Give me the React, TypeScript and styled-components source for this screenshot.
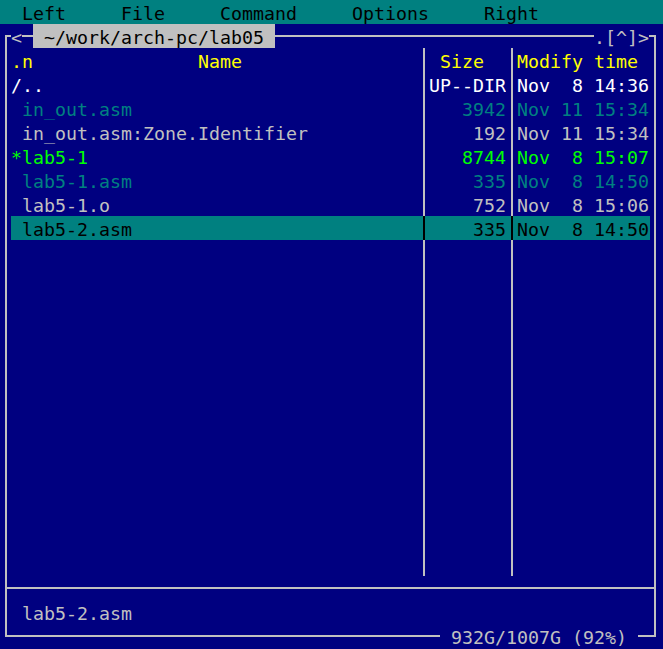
import styled, { createGlobalStyle } from 'styled-components';

// terminal grid: one cell is 11px wide and 24px high
const NAVY = '#000080';
const TEAL = '#008080';
const GRAY = '#c0c0c0';
const WHITE = '#ffffff';
const YELLOW = '#ffff00';
const GREEN = '#00ff00';
const BLACK = '#000000';

const GlobalStyle = createGlobalStyle`
  html, body {
    margin: 0;
    padding: 0;
    background: ${NAVY};
  }
`;

// line-height is a bit taller than the cell so glyphs sit 2px lower, like the terminal
const Screen = styled.div`
  width: 663px;
  height: 649px;
  overflow: hidden;
  background: ${NAVY};
  color: ${GRAY};
  font-family: 'DejaVu Sans Mono', 'Liberation Mono', monospace;
  font-size: 18.27px;
  line-height: 28px;
  white-space: pre;
`;

const MenuBar = styled.div`
  display: flex;
  gap: 55px;
  height: 24px;
  overflow: hidden;
  padding-left: 22px;
  background: ${TEAL};
  color: ${BLACK};
`;

const Panel = styled.div`
  position: relative;
  box-sizing: border-box;
  width: 651px;
  height: 602px;
  margin: 11px 0 0 5px;
  padding: 11px 4px;
  border: 2px solid ${GRAY};
  display: flex;
  flex-direction: column;
`;

const TitleTab = styled.div`
  position: absolute;
  top: -13px;
  left: 4px;
  display: flex;
  height: 24px;
  overflow: hidden;
`;

const Arrow = styled.span`
  background: ${NAVY};
  color: ${GRAY};
`;

const Gap = styled.span`
  width: 11px;
`;

const PathLabel = styled.span`
  background: ${GRAY};
  color: ${BLACK};
`;

const CornerLabel = styled.div<{ $bottom?: boolean }>`
  position: absolute;
  ${(p) => (p.$bottom ? 'bottom: -13px; right: 16px;' : 'top: -13px; right: 5px;')}
  height: 24px;
  overflow: hidden;
  background: ${NAVY};
  color: ${GRAY};
`;

const Listing = styled.div`
  height: 528px;
  display: flex;
  flex-direction: column;
`;

const Row = styled.div<{ $color: string; $selected?: boolean; $fill?: boolean }>`
  display: grid;
  grid-template-columns: 407px 11px 77px 11px 132px;
  height: ${(p) => (p.$fill ? 'auto' : '24px')};
  flex: ${(p) => (p.$fill ? 1 : 'none')};
  background: ${(p) => (p.$selected ? TEAL : 'transparent')};
  color: ${(p) => p.$color};
`;

const Cell = styled.div<{ $right?: boolean }>`
  overflow: hidden;
  text-align: ${(p) => (p.$right ? 'right' : 'left')};
`;

const Sep = styled.div<{ $line: string }>`
  background: linear-gradient(${(p) => p.$line}, ${(p) => p.$line}) 5px 0 / 2px 100% no-repeat;
`;

const Divider = styled.div`
  height: 2px;
  margin: 11px -4px;
  background: ${GRAY};
`;

const Status = styled.div`
  height: 24px;
  overflow: hidden;
  padding-left: 11px;
  color: ${GRAY};
`;

type Entry = { name: string; size: string; date: string; color: string; selected?: boolean };

const files: Entry[] = [
  { name: '/..', size: 'UP--DIR', date: 'Nov  8 14:36', color: WHITE },
  { name: ' in_out.asm', size: '3942', date: 'Nov 11 15:34', color: TEAL },
  { name: ' in_out.asm:Zone.Identifier', size: '192', date: 'Nov 11 15:34', color: GRAY },
  { name: '*lab5-1', size: '8744', date: 'Nov  8 15:07', color: GREEN },
  { name: ' lab5-1.asm', size: '335', date: 'Nov  8 14:50', color: TEAL },
  { name: ' lab5-1.o', size: '752', date: 'Nov  8 15:06', color: GRAY },
  { name: ' lab5-2.asm', size: '335', date: 'Nov  8 14:50', color: BLACK, selected: true },
];

const menu = ['Left', 'File', 'Command', 'Options', 'Right'];

export default function App() {
  return (
    <Screen>
      <GlobalStyle />
      <MenuBar>
        {menu.map((m) => (
          <span key={m}>{m}</span>
        ))}
      </MenuBar>
      <Panel>
        <TitleTab>
          <Arrow>&lt;</Arrow>
          <Gap />
          <PathLabel> ~/work/arch-pc/lab05 </PathLabel>
        </TitleTab>
        <CornerLabel>.[^]&gt;</CornerLabel>

        <Listing>
          <Row $color={YELLOW}>
            <Cell>{'.n               Name'}</Cell>
            <Sep $line={GRAY} />
            <Cell>{' Size'}</Cell>
            <Sep $line={GRAY} />
            <Cell>Modify time</Cell>
          </Row>
          {files.map((f) => (
            <Row key={f.name} $color={f.color} $selected={f.selected}>
              <Cell>{f.name}</Cell>
              <Sep $line={f.selected ? BLACK : GRAY} />
              <Cell $right>{f.size}</Cell>
              <Sep $line={f.selected ? BLACK : GRAY} />
              <Cell>{f.date}</Cell>
            </Row>
          ))}
          <Row $color={GRAY} $fill>
            <Cell />
            <Sep $line={GRAY} />
            <Cell />
            <Sep $line={GRAY} />
            <Cell />
          </Row>
        </Listing>

        <Divider />
        <Status>lab5-2.asm</Status>
        <CornerLabel $bottom> 932G/1007G (92%) </CornerLabel>
      </Panel>
    </Screen>
  );
}
